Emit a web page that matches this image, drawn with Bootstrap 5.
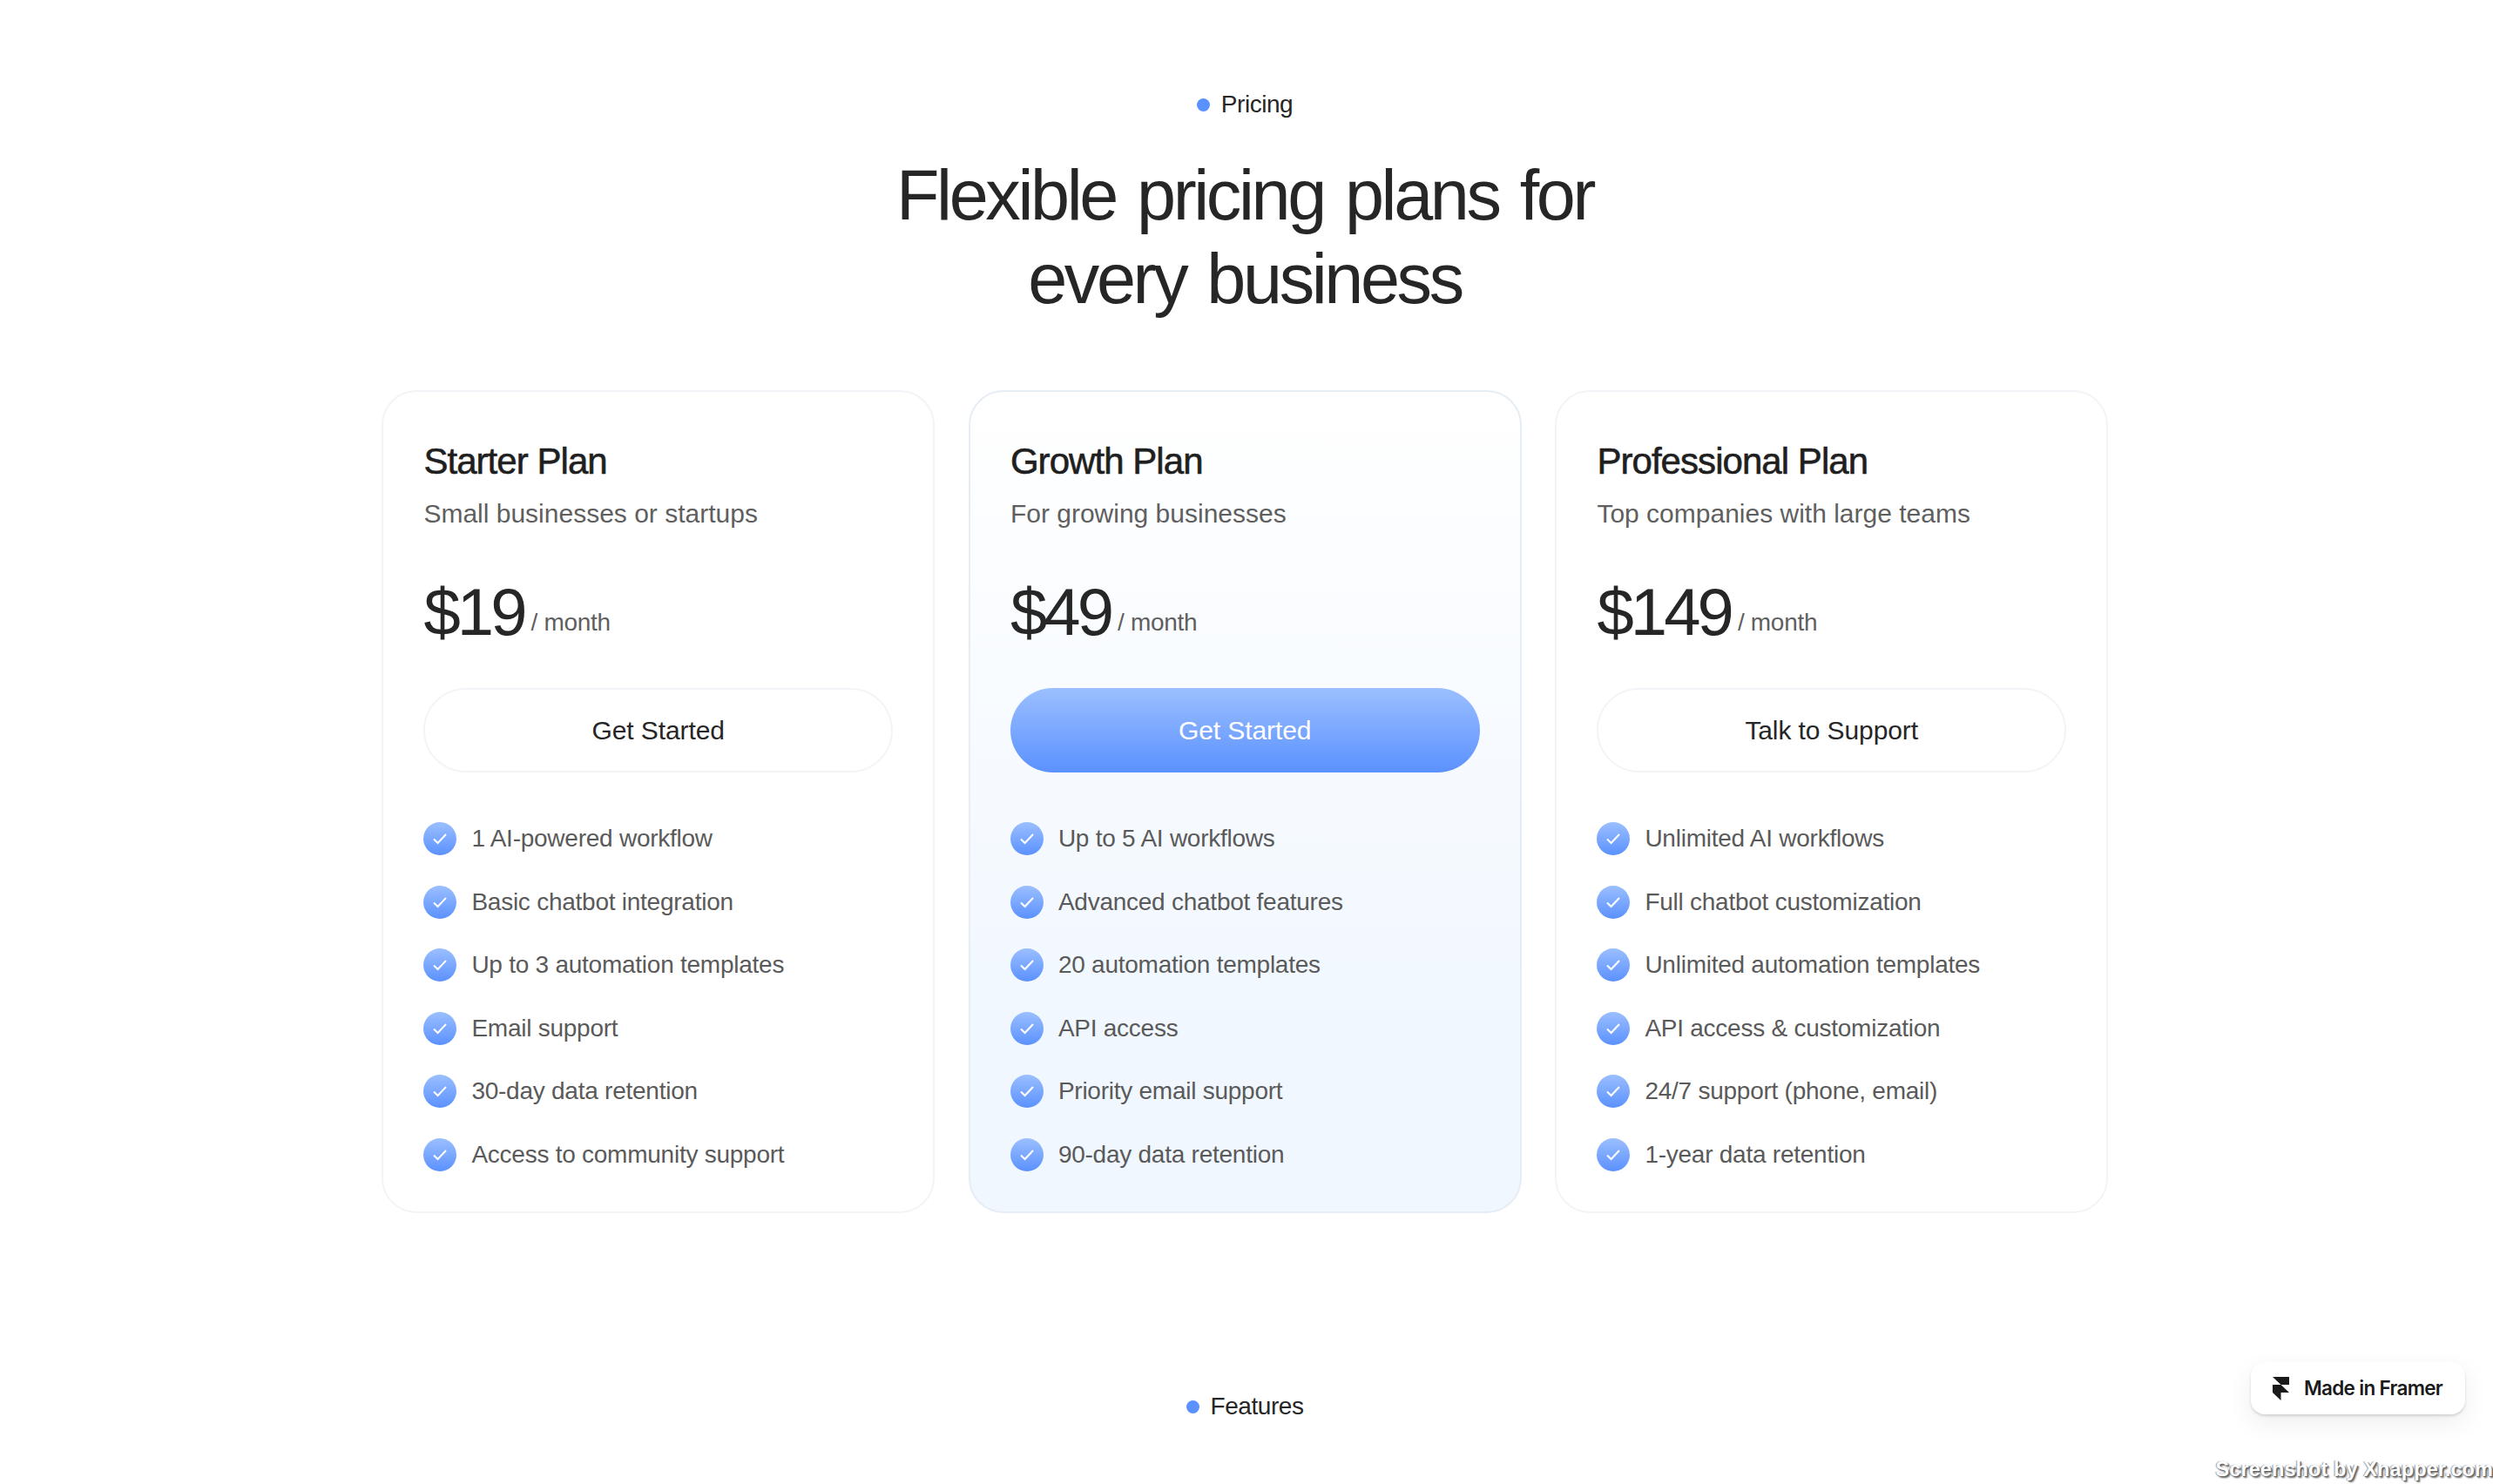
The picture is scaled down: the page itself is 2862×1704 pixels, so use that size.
<!DOCTYPE html>
<html lang="en"><head><meta charset="utf-8"><title>Pricing</title>
<link rel="stylesheet" href="https://cdn.jsdelivr.net/npm/bootstrap@5.3.0/dist/css/bootstrap.min.css">
<style>
html,body{height:1704px;overflow:hidden;background:#fff}
body{font-family:"Liberation Sans",Arial,sans-serif;color:#262626;position:relative}
.page-wrap{width:1982px;margin:0 0 0 438px;padding-top:100px}
.eyebrow{font-size:28px;line-height:40px;letter-spacing:-.45px;color:#262626;gap:13px}
.dot{width:15px;height:15px;border-radius:50%;background:#5b91ff;flex:none}
.headline{font-size:81px;line-height:96px;font-weight:400;letter-spacing:-3.4px;word-spacing:5px;margin:36px 0 0;color:#262626;text-align:center}
.plans{display:grid;grid-template-columns:repeat(3,635px);gap:38.5px;margin-top:80px}
.plan{height:945px;border:2px solid #f2f4f7;border-radius:40px;padding:0 46px 0 46.4px;background:#fff}
.plan-hi{background:linear-gradient(180deg,#fff 0%,#f0f7ff 80%);border-color:#e6edf5}
.plan-name{font-size:42px;line-height:48px;font-weight:400;letter-spacing:-.95px;-webkit-text-stroke:.6px #1f1f1f;color:#1f1f1f;margin:56px 0 0}
.plan-sub{font-size:30px;line-height:40px;letter-spacing:0;color:#5f5f5f;margin:16px 0 0}
.price-line{margin-top:53px;height:80px;gap:8px}
.amount{font-size:76px;line-height:80px;letter-spacing:-3.9px;color:#262626}
.per{font-size:28px;line-height:32px;letter-spacing:-.3px;color:#5f5f5f;margin-bottom:12px}
.cta{display:block;width:100%;height:97px;line-height:93px;padding:0;border-radius:49px;font-size:30px;letter-spacing:-.1px;color:#262626;background:#fff;border:2px solid #f2f4f7;margin-top:47px}
.cta:hover{color:#262626;background:#fff;border-color:#f2f4f7}
.cta-hi,.cta-hi:hover{color:#fff;background:linear-gradient(180deg,#9bbfff 0%,#5b91ff 100%);border:0;line-height:97px}
.feats{margin:40px 0 0;padding:0;list-style:none}
.feats li{display:flex;align-items:center;gap:17px;height:72.5px;font-size:28px;letter-spacing:-.25px;color:#5a5a5a}
.tick{width:38px;height:38px;flex:none;border-radius:50%;background:linear-gradient(180deg,#9bbfff 0%,#5b91ff 100%);display:flex;align-items:center;justify-content:center}
.next-sec{margin-top:202px}
.framer{position:absolute;left:2584px;top:1564px;width:246px;height:60px;background:#fff;border-radius:16px;box-shadow:0 2px 3px rgba(0,0,0,.14),0 10px 30px rgba(0,0,0,.07);gap:17px;padding-left:25px;font-family:Inter,"Liberation Sans",sans-serif;font-size:22.5px;font-weight:600;letter-spacing:-.7px;color:#1a1a1a}
.xnapper{position:absolute;right:0;bottom:0;font-size:23.5px;line-height:34px;font-weight:700;color:#fff;white-space:nowrap;letter-spacing:.1px;text-shadow:1px 1px 0 #666,2px 2px 2px #666,-1px 0 1px #999}
</style></head><body>
<main class="page-wrap">
<div class="eyebrow d-flex align-items-center justify-content-center"><span class="dot"></span><span>Pricing</span></div>
<h1 class="headline">Flexible pricing plans for<br>every business</h1>
<section class="plans">
<div class="plan">
<h2 class="plan-name">Starter Plan</h2><p class="plan-sub">Small businesses or startups</p>
<div class="price-line d-flex align-items-end"><span class="amount">$19</span><span class="per">/ month</span></div>
<a class="btn cta" href="#">Get Started</a>
<ul class="feats">
<li><span class="tick"><svg width="18" height="14" viewBox="0 0 18 14"><path d="M2 7.5l4.6 4.5L16 2" fill="none" stroke="#fff" stroke-width="2"/></svg></span>1 AI-powered workflow</li>
<li><span class="tick"><svg width="18" height="14" viewBox="0 0 18 14"><path d="M2 7.5l4.6 4.5L16 2" fill="none" stroke="#fff" stroke-width="2"/></svg></span>Basic chatbot integration</li>
<li><span class="tick"><svg width="18" height="14" viewBox="0 0 18 14"><path d="M2 7.5l4.6 4.5L16 2" fill="none" stroke="#fff" stroke-width="2"/></svg></span>Up to 3 automation templates</li>
<li><span class="tick"><svg width="18" height="14" viewBox="0 0 18 14"><path d="M2 7.5l4.6 4.5L16 2" fill="none" stroke="#fff" stroke-width="2"/></svg></span>Email support</li>
<li><span class="tick"><svg width="18" height="14" viewBox="0 0 18 14"><path d="M2 7.5l4.6 4.5L16 2" fill="none" stroke="#fff" stroke-width="2"/></svg></span>30-day data retention</li>
<li><span class="tick"><svg width="18" height="14" viewBox="0 0 18 14"><path d="M2 7.5l4.6 4.5L16 2" fill="none" stroke="#fff" stroke-width="2"/></svg></span>Access to community support</li>
</ul></div>
<div class="plan plan-hi">
<h2 class="plan-name">Growth Plan</h2><p class="plan-sub">For growing businesses</p>
<div class="price-line d-flex align-items-end"><span class="amount">$49</span><span class="per">/ month</span></div>
<a class="btn cta cta-hi" href="#">Get Started</a>
<ul class="feats">
<li><span class="tick"><svg width="18" height="14" viewBox="0 0 18 14"><path d="M2 7.5l4.6 4.5L16 2" fill="none" stroke="#fff" stroke-width="2"/></svg></span>Up to 5 AI workflows</li>
<li><span class="tick"><svg width="18" height="14" viewBox="0 0 18 14"><path d="M2 7.5l4.6 4.5L16 2" fill="none" stroke="#fff" stroke-width="2"/></svg></span>Advanced chatbot features</li>
<li><span class="tick"><svg width="18" height="14" viewBox="0 0 18 14"><path d="M2 7.5l4.6 4.5L16 2" fill="none" stroke="#fff" stroke-width="2"/></svg></span>20 automation templates</li>
<li><span class="tick"><svg width="18" height="14" viewBox="0 0 18 14"><path d="M2 7.5l4.6 4.5L16 2" fill="none" stroke="#fff" stroke-width="2"/></svg></span>API access</li>
<li><span class="tick"><svg width="18" height="14" viewBox="0 0 18 14"><path d="M2 7.5l4.6 4.5L16 2" fill="none" stroke="#fff" stroke-width="2"/></svg></span>Priority email support</li>
<li><span class="tick"><svg width="18" height="14" viewBox="0 0 18 14"><path d="M2 7.5l4.6 4.5L16 2" fill="none" stroke="#fff" stroke-width="2"/></svg></span>90-day data retention</li>
</ul></div>
<div class="plan">
<h2 class="plan-name">Professional Plan</h2><p class="plan-sub">Top companies with large teams</p>
<div class="price-line d-flex align-items-end"><span class="amount">$149</span><span class="per">/ month</span></div>
<a class="btn cta" href="#">Talk to Support</a>
<ul class="feats">
<li><span class="tick"><svg width="18" height="14" viewBox="0 0 18 14"><path d="M2 7.5l4.6 4.5L16 2" fill="none" stroke="#fff" stroke-width="2"/></svg></span>Unlimited AI workflows</li>
<li><span class="tick"><svg width="18" height="14" viewBox="0 0 18 14"><path d="M2 7.5l4.6 4.5L16 2" fill="none" stroke="#fff" stroke-width="2"/></svg></span>Full chatbot customization</li>
<li><span class="tick"><svg width="18" height="14" viewBox="0 0 18 14"><path d="M2 7.5l4.6 4.5L16 2" fill="none" stroke="#fff" stroke-width="2"/></svg></span>Unlimited automation templates</li>
<li><span class="tick"><svg width="18" height="14" viewBox="0 0 18 14"><path d="M2 7.5l4.6 4.5L16 2" fill="none" stroke="#fff" stroke-width="2"/></svg></span>API access &amp; customization</li>
<li><span class="tick"><svg width="18" height="14" viewBox="0 0 18 14"><path d="M2 7.5l4.6 4.5L16 2" fill="none" stroke="#fff" stroke-width="2"/></svg></span>24/7 support (phone, email)</li>
<li><span class="tick"><svg width="18" height="14" viewBox="0 0 18 14"><path d="M2 7.5l4.6 4.5L16 2" fill="none" stroke="#fff" stroke-width="2"/></svg></span>1-year data retention</li>
</ul></div>
</section>
<div class="eyebrow next-sec d-flex align-items-center justify-content-center"><span class="dot"></span><span>Features</span></div>
</main>
<div class="framer d-flex align-items-center"><svg width="19" height="27" viewBox="0 0 19 27"><path d="M0 0h19v9H9.5zM0 9h9.5l9.5 9H9.5v9L0 18z" fill="#1a1a1a"/></svg><span>Made in Framer</span></div>
<div class="xnapper">Screenshot by Xnapper.com</div>
</body></html>
